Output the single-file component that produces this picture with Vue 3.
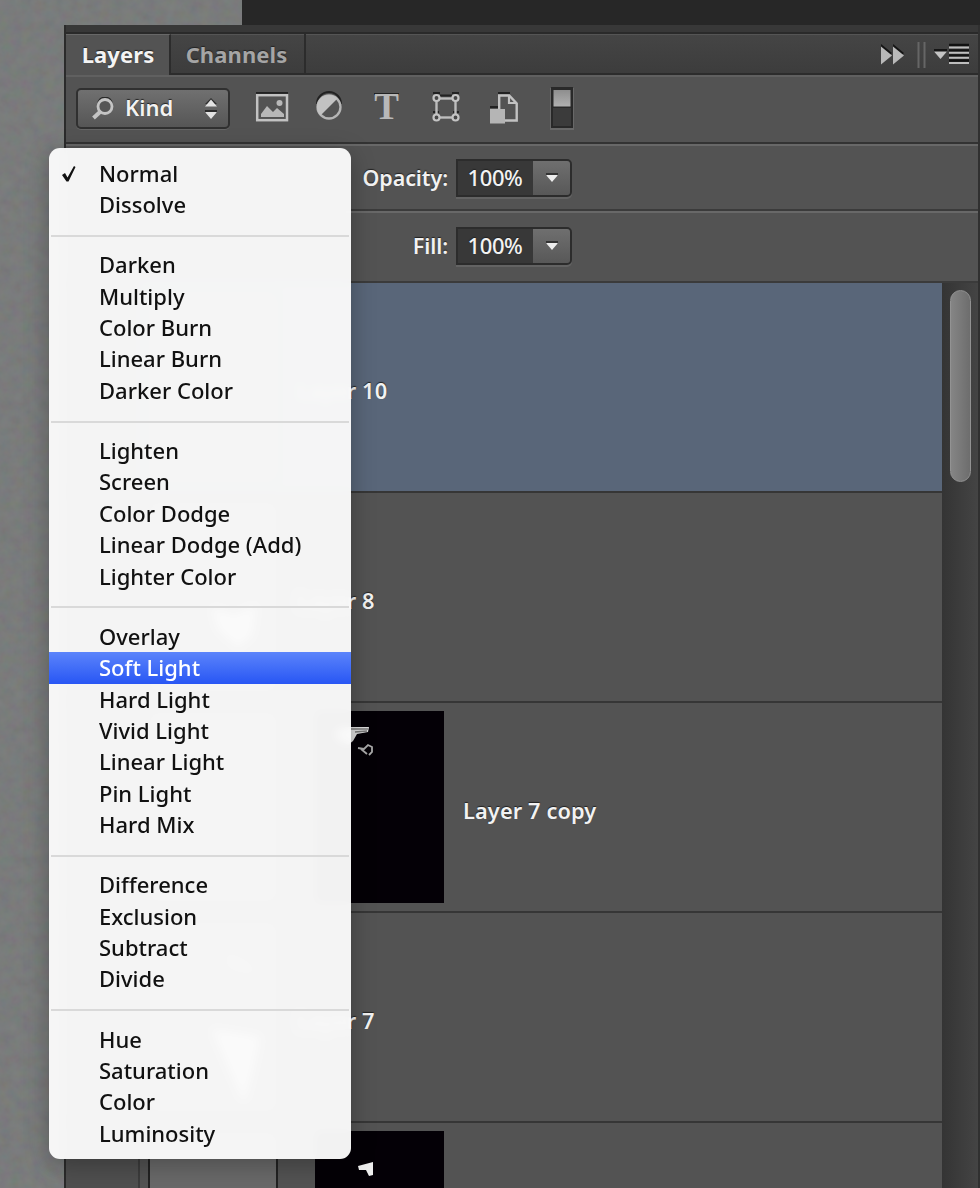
<script setup>
import { ref } from 'vue'

const groups = [
  ['Normal', 'Dissolve'],
  ['Darken', 'Multiply', 'Color Burn', 'Linear Burn', 'Darker Color'],
  ['Lighten', 'Screen', 'Color Dodge', 'Linear Dodge (Add)', 'Lighter Color'],
  ['Overlay', 'Soft Light', 'Hard Light', 'Vivid Light', 'Linear Light', 'Pin Light', 'Hard Mix'],
  ['Difference', 'Exclusion', 'Subtract', 'Divide'],
  ['Hue', 'Saturation', 'Color', 'Luminosity']
]

const layers = [
  { id: 1, name: 'Layer 10', selected: true },
  { id: 2, name: 'Layer 8', sketch: 'small' },
  { id: 3, name: 'Layer 7 copy', mask: 'wing' },
  { id: 4, name: 'Layer 7', sketch: 'large' },
  { id: 5, name: '', mask: 'flag' }
]

const checked = ref('Normal')
const hovered = ref('Soft Light')
const tab = ref('Layers')
const sliders = [
  { label: 'Opacity:', value: '100%' },
  { label: 'Fill:', value: '100%' }
]

const pick = (mode) => {
  checked.value = mode
}
</script>

<template>
  <div class="screen">
    <svg class="grain" width="242" height="1188">
      <filter id="grain" x="0" y="0" width="100%" height="100%">
        <feTurbulence type="fractalNoise" baseFrequency="0.09" numOctaves="3" seed="4" />
        <feColorMatrix values="1 0 0 0 0  0 1 0 0 0  0 0 1 0 0  0 0 0 0 1" />
      </filter>
      <rect width="242" height="1188" filter="url(#grain)" />
    </svg>
    <div class="app-bar"></div>

    <section class="panel">
      <div class="grip"></div>
      <header class="tabs">
        <button
          v-for="name in ['Layers', 'Channels']"
          :key="name"
          :class="['tab', { active: tab === name }]"
          @click="tab = name"
        >{{ name }}</button>
        <svg class="tab-tools" width="96" height="40" viewBox="877 35 96 40">
          <path d="M881 45v19l11-10zM893 45v19l11-10z" fill="#151515" />
          <path d="M881 47.500v18l11-9zM893 47.500v18l11-9z" fill="#b9b9b9" />
          <path d="M918.500 43v26M924.500 43v26" stroke="#666" stroke-width="2" />
          <path d="M934 50h13v3h-13z" fill="#151515" />
          <path d="M934 52.500h13l-6.500 7.500z" fill="#c4c4c4" />
          <path d="M949 46h20M949 51.500h20M949 56.500h20M949 61.500h20" stroke="#111" stroke-width="2.400" />
          <path d="M949 48.500h20M949 53.700h20M949 58.800h20M949 63.900h20" stroke="#bdbdbd" stroke-width="2" />
        </svg>
      </header>

      <div class="filters">
        <div class="kind">
          <svg width="24" height="24" viewBox="0 0 24 24">
            <circle cx="14" cy="7.500" r="7" fill="none" stroke="#292929" stroke-width="2" />
            <circle cx="14" cy="9.500" r="7" fill="#555" stroke="#c4c4c4" stroke-width="2.800" />
            <path d="M9 15l-6.500 6" stroke="#c4c4c4" stroke-width="4" />
          </svg>
          <span>Kind</span>
          <svg class="arrows" width="14" height="24" viewBox="0 0 14 24">
            <path d="M1 7l6-6 6 6zM1 13h12v3H1z" fill="#2c2c2c" />
            <path d="M1 9.500l6-7 6 7zM1 15l6 7 6-7z" fill="#e2e2e2" />
          </svg>
        </div>
        <svg class="filter-icons" width="330" height="60" viewBox="250 78 330 60">
          <path d="M256 93h32" stroke="#222" stroke-width="2" />
          <rect x="257.200" y="95.200" width="29.800" height="25" fill="none" stroke="#c2c2c2" stroke-width="2.500" />
          <path d="M261 117v-3l6-8 6 6 4-4 7 6v3z" fill="#b8b8b8" />
          <circle cx="279.500" cy="103" r="3" fill="#b8b8b8" />

          <path d="M317 104a12 12 0 0 1 24 0" fill="none" stroke="#222" stroke-width="2" />
          <circle cx="329" cy="107" r="11.500" fill="#535353" stroke="#b5b5b5" stroke-width="2.300" />
          <path d="M320.500 115.500a12 12 0 0 1 17-17z" fill="#c2c2c2" />

          <path d="M374 94h25" stroke="#222" stroke-width="2" />
          <text class="type-icon" x="386.500" y="119" text-anchor="middle">T</text>

          <path d="M433 93h7M440 95.500h12M452 93h7M433 112h6M453 112h6" stroke="#222" stroke-width="2" />
          <rect x="436.500" y="98.500" width="19" height="19" fill="none" stroke="#bdbdbd" stroke-width="2.400" />
          <g fill="#474747" stroke="#c4c4c4" stroke-width="2.200">
            <circle cx="436.500" cy="98" r="3" />
            <circle cx="455.500" cy="98" r="3" />
            <circle cx="436.500" cy="117.500" r="3" />
            <circle cx="455.500" cy="117.500" r="3" />
          </g>

          <path d="M498 93h12M490 107h9" stroke="#222" stroke-width="2.200" />
          <path d="M499.200 110V95.500h10l7.500 8V120.500h-12" fill="none" stroke="#c2c2c2" stroke-width="2.400" />
          <path d="M509 96v7h8" fill="none" stroke="#c2c2c2" stroke-width="2.200" />
          <rect x="490" y="109" width="15" height="14.500" fill="#b5b5b5" />

          <rect x="550" y="88" width="24" height="42" fill="#686868" />
          <rect x="551" y="87" width="22" height="41" fill="#292929" />
          <rect x="553" y="108" width="18" height="18" fill="#3b3b3b" />
          <linearGradient id="knob" x2="0" y2="1">
            <stop offset="0" stop-color="#8e8e8e" />
            <stop offset="1" stop-color="#b0b0b0" />
          </linearGradient>
          <rect x="553.500" y="90" width="17" height="16.500" fill="url(#knob)" />
        </svg>
      </div>

      <div v-for="s in sliders" :key="s.label" class="setting">
        <label>{{ s.label }}</label>
        <div class="field">
          <span class="value">{{ s.value }}</span>
          <span class="drop">
            <svg width="12" height="10" viewBox="0 0 12 10">
              <path d="M0 0h12v3H0z" fill="#333" />
              <path d="M0 2h12L6 9z" fill="#ededed" />
            </svg>
          </span>
        </div>
      </div>

      <div class="body">
        <div class="list">
          <div v-for="layer in layers" :key="layer.id" :class="['layer', { selected: layer.selected }]">
            <div class="eye"></div>
            <div class="thumb">
              <svg v-if="layer.sketch" width="126" height="190" viewBox="0 0 126 190">
                <path v-if="layer.sketch === 'small'" d="M62 104l22 8 22-10-4 30-14 12-20-18z" fill="#fff" />
                <path v-else d="M66 14l14 22 28 14-26-10zM62 106l48 8-8 36-8 30-14-32z" fill="#fff" />
              </svg>
            </div>
            <div v-if="layer.mask" class="mask">
              <svg width="129" height="192" viewBox="0 0 129 192">
                <g v-if="layer.mask === 'wing'">
                  <path d="M20 20l10-4 24 0-1 5-11 2-4 7-5 4-12-7z" fill="#dcdcdc" />
                  <path d="M36 18l17 0M40 21l12-1" stroke="#777" stroke-width="1.500" />
                  <path d="M43 37l6 1 4-4 4 2v5l-3 3M46 38l6 5" fill="none" stroke="#aaa" stroke-width="1.800" />
                </g>
                <path v-else d="M43 35l15-4v13l-4 1-3-6-7 0z" fill="#eee" />
              </svg>
            </div>
            <span class="name">{{ layer.name }}</span>
          </div>
        </div>
        <div class="track"><div class="handle"></div></div>
      </div>
    </section>

    <div class="menu">
      <template v-for="(group, i) in groups" :key="i">
        <div v-if="i > 0" class="divider"></div>
        <div
          v-for="mode in group"
          :key="mode"
          :class="['item', { hovered: hovered === mode }]"
          @mouseenter="hovered = mode"
          @click="pick(mode)"
        >
          <svg v-if="checked === mode" class="check" width="16" height="18" viewBox="0 0 16 18">
            <path d="M1 10l3-2 2.500 4.500L13 1l1.500 1L7.500 16.500H5.500z" fill="#111" />
          </svg>
          <span>{{ mode }}</span>
        </div>
      </template>
    </div>
  </div>
</template>

<style>
body {
  margin: 0;
  overflow: hidden;
}
</style>

<style scoped>
.screen {
  position: relative;
  box-sizing: border-box;
  width: 980px;
  height: 1188px;
  padding: 0 0 0 64px;
  overflow: hidden;
  background: #747676;
  font-family: "Noto Sans", "Open Sans", sans-serif;
  font-size: 22px;
}

.grain {
  position: absolute;
  left: 0;
  top: 0;
  opacity: 0.08;
}

.app-bar {
  height: 25px;
  margin-left: 178px;
  position: relative;
  background: #272727;
}

.panel {
  position: relative;
  box-sizing: border-box;
  display: flex;
  flex-direction: column;
  height: 1163px;
  background: #535353;
  border-left: 2px solid #2b2b2b;
  border-right: 2px solid #303030;
  color: #f2f2f2;
  text-shadow: 0 -1px 1px #222;
}

.grip {
  flex: none;
  height: 7px;
  background: #383838;
  border-bottom: 2px solid #2a2a2a;
}

.tabs {
  flex: none;
  display: flex;
  height: 41px;
  background: linear-gradient(#454545, #3c3c3c);
  box-shadow: inset 0 1px #555, inset 0 -2px #2c2c2c;
}

.tab {
  box-sizing: border-box;
  width: 135px;
  padding: 0 2px 2px 0;
  border: 0;
  border-right: 2px solid #2c2c2c;
  background: none;
  color: #a5a5a5;
  font: 700 22px/38px "Noto Sans", sans-serif;
  letter-spacing: 0.1px;
  text-shadow: 0 -1px 1px #222;
}

.tab.active {
  width: 105px;
  padding: 0 0 2px 1px;
  background: #535353;
  border-top: 1px solid #686868;
  color: #f3f3f3;
}

.tab-tools {
  margin-left: auto;
  margin-right: 5px;
}

.filters {
  flex: none;
  box-sizing: border-box;
  display: flex;
  align-items: flex-start;
  height: 69px;
  padding-left: 10px;
  border-top: 2px solid #606060;
  border-bottom: 2px solid #333;
}

.kind {
  box-sizing: border-box;
  display: flex;
  align-items: center;
  width: 154px;
  height: 41px;
  margin-top: 11px;
  padding: 0 10px 0 13px;
  border: 2px solid #303030;
  border-radius: 5px;
  background: linear-gradient(#707070, #565656);
  box-shadow: 0 1px #666;
  font-weight: 600;
}

.kind span {
  margin-left: 10px;
  padding-bottom: 3px;
}

.arrows {
  margin-left: auto;
}

.filter-icons {
  margin-left: 20px;
  margin-top: 1px;
}

.type-icon {
  font: 700 37px "Liberation Serif", serif;
  fill: #b8b8b8;
  text-shadow: none;
}

.setting {
  flex: none;
  box-sizing: border-box;
  display: flex;
  align-items: center;
  height: 67px;
  border-top: 2px solid #686868;
  border-bottom: 2px solid #3b3b3b;
}

.setting + .setting {
  height: 72px;
  padding-bottom: 3px;
}

.setting label {
  width: 382px;
  margin-right: 8px;
  text-align: right;
  font-weight: 600;
  font-size: 21.5px;
  letter-spacing: -0.1px;
}

.field {
  box-sizing: border-box;
  display: flex;
  width: 116px;
  height: 38px;
  border: 2px solid #2c2c2c;
  border-radius: 0 5px 5px 0;
  background: #383838;
  box-shadow: 0 2px #636363;
}

.value {
  box-sizing: border-box;
  width: 75px;
  padding-right: 1px;
  text-align: center;
  line-height: 33px;
  font-weight: 500;
  letter-spacing: -0.4px;
}

.drop {
  flex: 1;
  display: flex;
  align-items: center;
  justify-content: center;
  border-radius: 0 3px 3px 0;
  background: linear-gradient(#6f6f6f, #585858);
}

.body {
  flex: 1;
  display: flex;
  min-height: 0;
}

.list {
  flex: 1;
  overflow: hidden;
}

.layer {
  box-sizing: border-box;
  display: flex;
  align-items: center;
  height: 210px;
  border-bottom: 2px solid #363636;
  background: #535353;
}

.layer.selected {
  background: #596679;
}

.eye {
  box-sizing: border-box;
  align-self: stretch;
  width: 74px;
  border-right: 2px solid #3c3c3c;
  background: #4f4f4f;
}

.thumb {
  box-sizing: border-box;
  width: 130px;
  height: 192px;
  margin-left: 8px;
  border: 2px solid #222;
  background: #696969;
}

.mask {
  width: 129px;
  height: 192px;
  margin-left: 37px;
  background: #040006;
}

.name {
  margin-left: 19px;
  padding-top: 6px;
  font-size: 21.8px;
  font-weight: 600;
  letter-spacing: 0.1px;
}

.track {
  box-sizing: border-box;
  width: 36px;
  padding: 7px 6px 0 8px;
  background: linear-gradient(90deg, #343434, #444);
}

.handle {
  box-sizing: border-box;
  width: 21px;
  height: 192px;
  border: 1px solid #929292;
  border-radius: 11px;
  background: linear-gradient(90deg, #858585, #6d6d6d);
}

.menu {
  position: absolute;
  box-sizing: border-box;
  left: 49px;
  top: 148px;
  width: 302px;
  height: 1011px;
  padding-top: 10px;
  border-radius: 11px;
  background: rgba(250, 250, 250, 0.97);
  backdrop-filter: blur(5px);
  box-shadow: 0 6px 24px rgba(0, 0, 0, 0.28);
  color: #111;
}

.item {
  display: flex;
  align-items: center;
  height: 31.4px;
  padding-left: 50px;
  font-weight: 500;
  line-height: 31px;
  white-space: nowrap;
}

.item.hovered {
  background: linear-gradient(#5b84fb, #2856f4);
  color: #fff;
}

.item span {
  padding-bottom: 1px;
}

.check {
  margin: 0 22px 0 -38px;
}

.divider {
  height: 28.8px;
  margin: 0 2px;
  background: linear-gradient(#d9d9d9, #d9d9d9) center 14px / 100% 2px no-repeat;
}
</style>
